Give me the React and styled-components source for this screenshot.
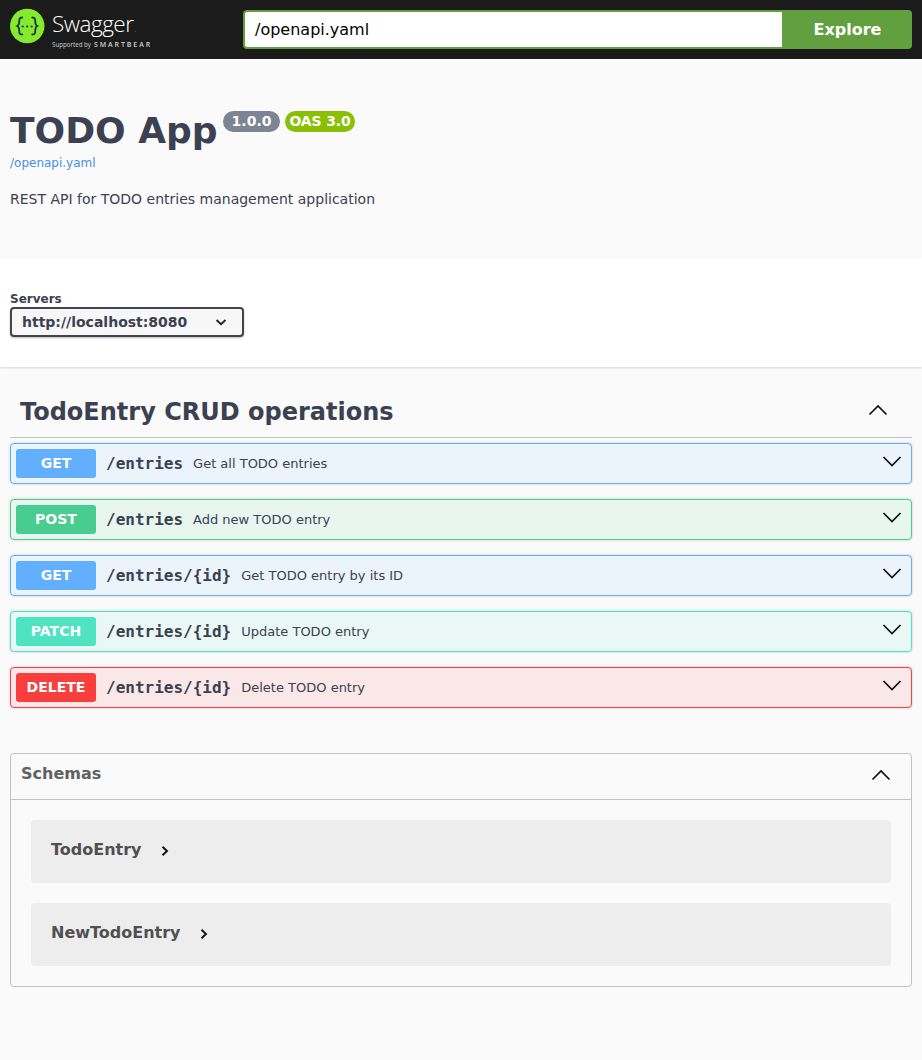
import React from "react";
import styled, { createGlobalStyle } from "styled-components";

const Global = createGlobalStyle`
  html, body { margin: 0; padding: 0; background: #fafafa; }
  body { font-family: "DejaVu Sans", sans-serif; color: #3b4151; }
  * { box-sizing: border-box; }
`;

const Page = styled.div`
  width: 922px;
  height: 1060px;
  overflow: hidden;
  background: #fafafa;
`;

const Topbar = styled.header`
  height: 59px;
  background: #1b1b1b;
  padding: 10px;
  display: flex;
  align-items: stretch;
`;
const Logo = styled.div`
  width: 233px;
  flex: none;
  display: flex;
  align-items: flex-start;
  gap: 6px;
`;
const LogoMark = styled.svg`
  flex: none;
  overflow: visible;
`;
const LogoText = styled.div`
  display: flex;
  flex-direction: column;
  color: #fff;
`;
const LogoWord = styled.span`
  font-family: "Open Sans", sans-serif;
  font-weight: 300;
  font-size: 22.5px;
  line-height: 28px;
  letter-spacing: -0.5px;
  height: 31px;
`;
const LogoTm = styled.span`
  font-size: 7px;
  letter-spacing: 0;
  margin-left: 1px;
  color: #bbb;
`;
const LogoSub = styled.span`
  font-family: "Open Sans", sans-serif;
  font-size: 6.2px;
  line-height: 8px;
  color: #d0d0d0;
  white-space: nowrap;
`;
const LogoBear = styled.b`
  font-size: 7px;
  font-weight: 600;
  letter-spacing: 1.9px;
  margin-left: 3px;
`;
const Search = styled.div`
  flex: 1;
  display: flex;
`;
const Input = styled.div`
  flex: 1;
  border: 2px solid #62a03f;
  border-right: none;
  border-radius: 4px 0 0 4px;
  background: #fff;
  color: #000;
  font-size: 16px;
  line-height: 35px;
  padding-left: 10px;
`;
const Explore = styled.div`
  width: 130px;
  background: #62a03f;
  border-radius: 0 4px 4px 0;
  color: #fff;
  font-weight: 700;
  font-size: 16px;
  line-height: 39px;
  text-align: center;
  padding-left: 1px;
`;

const Info = styled.section`
  height: 199px;
  padding: 50px 10px 0;
`;
const TitleRow = styled.div`
  display: flex;
  align-items: flex-start;
`;
const Title = styled.h1`
  margin: 0;
  font-size: 36px;
  line-height: 43px;
  font-weight: 700;
  color: #3b4151;
`;
const Badge = styled.span`
  display: inline-block;
  margin: 2px 0 0 5px;
  height: 21px;
  line-height: 21px;
  padding: 0 ${(p) => p.$pad}px;
  border-radius: 57px;
  background: ${(p) => p.$bg};
  color: #fff;
  font-size: 14px;
  font-weight: 700;
  letter-spacing: ${(p) => p.$track || 0}px;
`;
const SpecLink = styled.div`
  margin-top: 2px;
  font-size: 12px;
  line-height: 18px;
  color: #4990e2;
`;
const Desc = styled.p`
  margin: 17px 0 0;
  font-size: 14px;
  line-height: 20px;
  color: #3b4151;
`;

const Schemes = styled.section`
  height: 109px;
  background: #fff;
  box-shadow: 0 1px 2px 0 rgba(0, 0, 0, 0.15);
  padding: 34px 10px 0;
`;
const ServersLabel = styled.div`
  font-size: 12px;
  line-height: 15px;
  font-weight: 700;
  color: #3b4151;
`;
const Select = styled.div`
  width: 234px;
  height: 30px;
  border: 2px solid #41444e;
  border-radius: 4px;
  background: #f7f7f7;
  box-shadow: 0 1px 2px 0 rgba(0, 0, 0, 0.25);
  display: flex;
  align-items: center;
  justify-content: space-between;
  padding: 0 14px 0 10px;
  font-size: 14px;
  font-weight: 700;
  color: #3b4151;
`;

const Main = styled.main`
  padding: 0 10px;
`;
const TagHeader = styled.div`
  height: 71px;
  padding: 27px 24px 0 10px;
  border-bottom: 1px solid rgba(59, 65, 81, 0.3);
  display: flex;
  justify-content: space-between;
  align-items: flex-start;
`;
const TagTitle = styled.h3`
  margin: 0;
  font-size: 24px;
  line-height: 36px;
  font-weight: 700;
  color: #3b4151;
`;
const TagCaret = styled.svg`
  margin-top: 6px;
`;
const Ops = styled.div`
  display: flex;
  flex-direction: column;
  gap: 15px;
  margin-top: 5px;
`;
const Op = styled.div`
  height: 41px;
  border: 1px solid ${(p) => p.$c};
  border-radius: 4px;
  background: ${(p) => p.$bg};
  box-shadow: 0 0 3px rgba(0, 0, 0, 0.19);
  display: flex;
  align-items: center;
  padding: 0 9px 0 5px;
`;
const Method = styled.span`
  width: 80px;
  height: 29px;
  flex: none;
  border-radius: 3px;
  background: ${(p) => p.$c};
  color: #fff;
  font-size: 14px;
  font-weight: 700;
  line-height: 29px;
  text-align: center;
`;
const Path = styled.span`
  margin-left: 10px;
  font-family: "DejaVu Sans Mono", monospace;
  font-size: 16px;
  font-weight: 600;
  color: #3b4151;
`;
const Summary = styled.span`
  margin-left: 10px;
  flex: 1;
  font-size: 13px;
  color: #3b4151;
`;

const Models = styled.section`
  margin-top: 45px;
  height: 234px;
  border: 1px solid rgba(59, 65, 81, 0.3);
  border-radius: 4px;
`;
const ModelsHead = styled.div`
  height: 46px;
  border-bottom: 1px solid rgba(59, 65, 81, 0.3);
  display: flex;
  justify-content: space-between;
  align-items: flex-start;
  padding: 10px 20px 0 10px;
`;
const ModelsTitle = styled.span`
  font-size: 16px;
  line-height: 20px;
  font-weight: 700;
  color: #606060;
`;
const ModelsCaret = styled.svg`
  margin-top: 1px;
`;
const ModelsBody = styled.div`
  padding: 20px;
  display: flex;
  flex-direction: column;
  gap: 20px;
`;
const Model = styled.div`
  height: 63px;
  border-radius: 4px;
  background: rgba(0, 0, 0, 0.05);
  display: flex;
  align-items: center;
  gap: 20px;
  padding: 0 20px 4px;
  font-size: 16px;
  font-weight: 700;
  color: #505050;
`;
const ChevronIcon = styled.svg`
  margin: 3px 0 0 -2px;
`;

const UpCaret = ({ as: C }) => (
  <C width="20" height="20" viewBox="0 0 20 20" fill="none">
    <path d="M1.5 14.5 10 6l8.5 8.5" stroke="#111" strokeWidth="1.7" />
  </C>
);

const DownCaret = styled.svg`
  flex: none;
  margin-top: -5px;
`;

const ops = [
  { m: "GET", c: "#61affe", bg: "#ebf3fb", p: "/entries", s: "Get all TODO entries" },
  { m: "POST", c: "#49cc90", bg: "#e8f6f0", p: "/entries", s: "Add new TODO entry" },
  { m: "GET", c: "#61affe", bg: "#ebf3fb", p: "/entries/{id}", s: "Get TODO entry by its ID" },
  { m: "PATCH", c: "#50e3c2", bg: "#e9f8f5", p: "/entries/{id}", s: "Update TODO entry" },
  { m: "DELETE", c: "#f93e3e", bg: "#fae7e7", p: "/entries/{id}", s: "Delete TODO entry" },
];

const Chevron = () => (
  <ChevronIcon width="10" height="12" viewBox="0 0 10 12" fill="none">
    <path d="M2.5 1.8 7 6l-4.500 4.200" stroke="#111" strokeWidth="1.9" />
  </ChevronIcon>
);

export default function App() {
  return (
    <Page>
      <Global />
      <Topbar>
        <Logo>
          <LogoMark width="36" height="36" viewBox="0 0 36 36">
            <circle cx="17.25" cy="16" r="17.25" fill="#85ea2d" />
            <g transform="translate(-0.75 -1)">
              <g fill="none" stroke="#173646" strokeWidth="1.8" strokeLinecap="round">
                <path d="M13 8.5c-3 0-3 1.500-3 4s0 3.500-2 4.500c2 1 2 2 2 4.500s0 4 3 4" />
                <path d="M23 8.5c3 0 3 1.500 3 4s0 3.500 2 4.500c-2 1-2 2-2 4.500s0 4-3 4" />
              </g>
              <g fill="#173646">
                <circle cx="13.5" cy="17.5" r="1.1" />
                <circle cx="18" cy="17.5" r="1.1" />
                <circle cx="22.5" cy="17.5" r="1.1" />
              </g>
            </g>
          </LogoMark>
          <LogoText>
            <LogoWord>
              Swagger<LogoTm>.</LogoTm>
            </LogoWord>
            <LogoSub>
              Supported by<LogoBear>SMARTBEAR</LogoBear>
            </LogoSub>
          </LogoText>
        </Logo>
        <Search>
          <Input>/openapi.yaml</Input>
          <Explore>Explore</Explore>
        </Search>
      </Topbar>
      <Info>
        <TitleRow>
          <Title>TODO App</Title>
          <Badge $bg="#7d8492" $pad={9}>1.0.0</Badge>
          <Badge $bg="#89bf04" $pad={4} $track={-0.15}>OAS 3.0</Badge>
        </TitleRow>
        <SpecLink>/openapi.yaml</SpecLink>
        <Desc>REST API for TODO entries management application</Desc>
      </Info>
      <Schemes>
        <ServersLabel>Servers</ServersLabel>
        <Select>
          http://localhost:8080
          <svg width="14" height="14" viewBox="0 0 14 14" fill="none">
            <path d="M2.5 5 7 9.2 11.500 5" stroke="#222" strokeWidth="1.8" />
          </svg>
        </Select>
      </Schemes>
      <Main>
        <TagHeader>
          <TagTitle>TodoEntry CRUD operations</TagTitle>
          <UpCaret as={TagCaret} />
        </TagHeader>
        <Ops>
          {ops.map((o, i) => (
            <Op key={i} $c={o.c} $bg={o.bg}>
              <Method $c={o.c}>{o.m}</Method>
              <Path>{o.p}</Path>
              <Summary>{o.s}</Summary>
              <DownCaret width="20" height="20" viewBox="0 0 20 20" fill="none">
                <path d="M1.5 6 10 14.5 18.5 6" stroke="#111" strokeWidth="1.7" />
              </DownCaret>
            </Op>
          ))}
        </Ops>
        <Models>
          <ModelsHead>
            <ModelsTitle>Schemas</ModelsTitle>
            <UpCaret as={ModelsCaret} />
          </ModelsHead>
          <ModelsBody>
            <Model>
              TodoEntry <Chevron />
            </Model>
            <Model>
              NewTodoEntry <Chevron />
            </Model>
          </ModelsBody>
        </Models>
      </Main>
    </Page>
  );
}
